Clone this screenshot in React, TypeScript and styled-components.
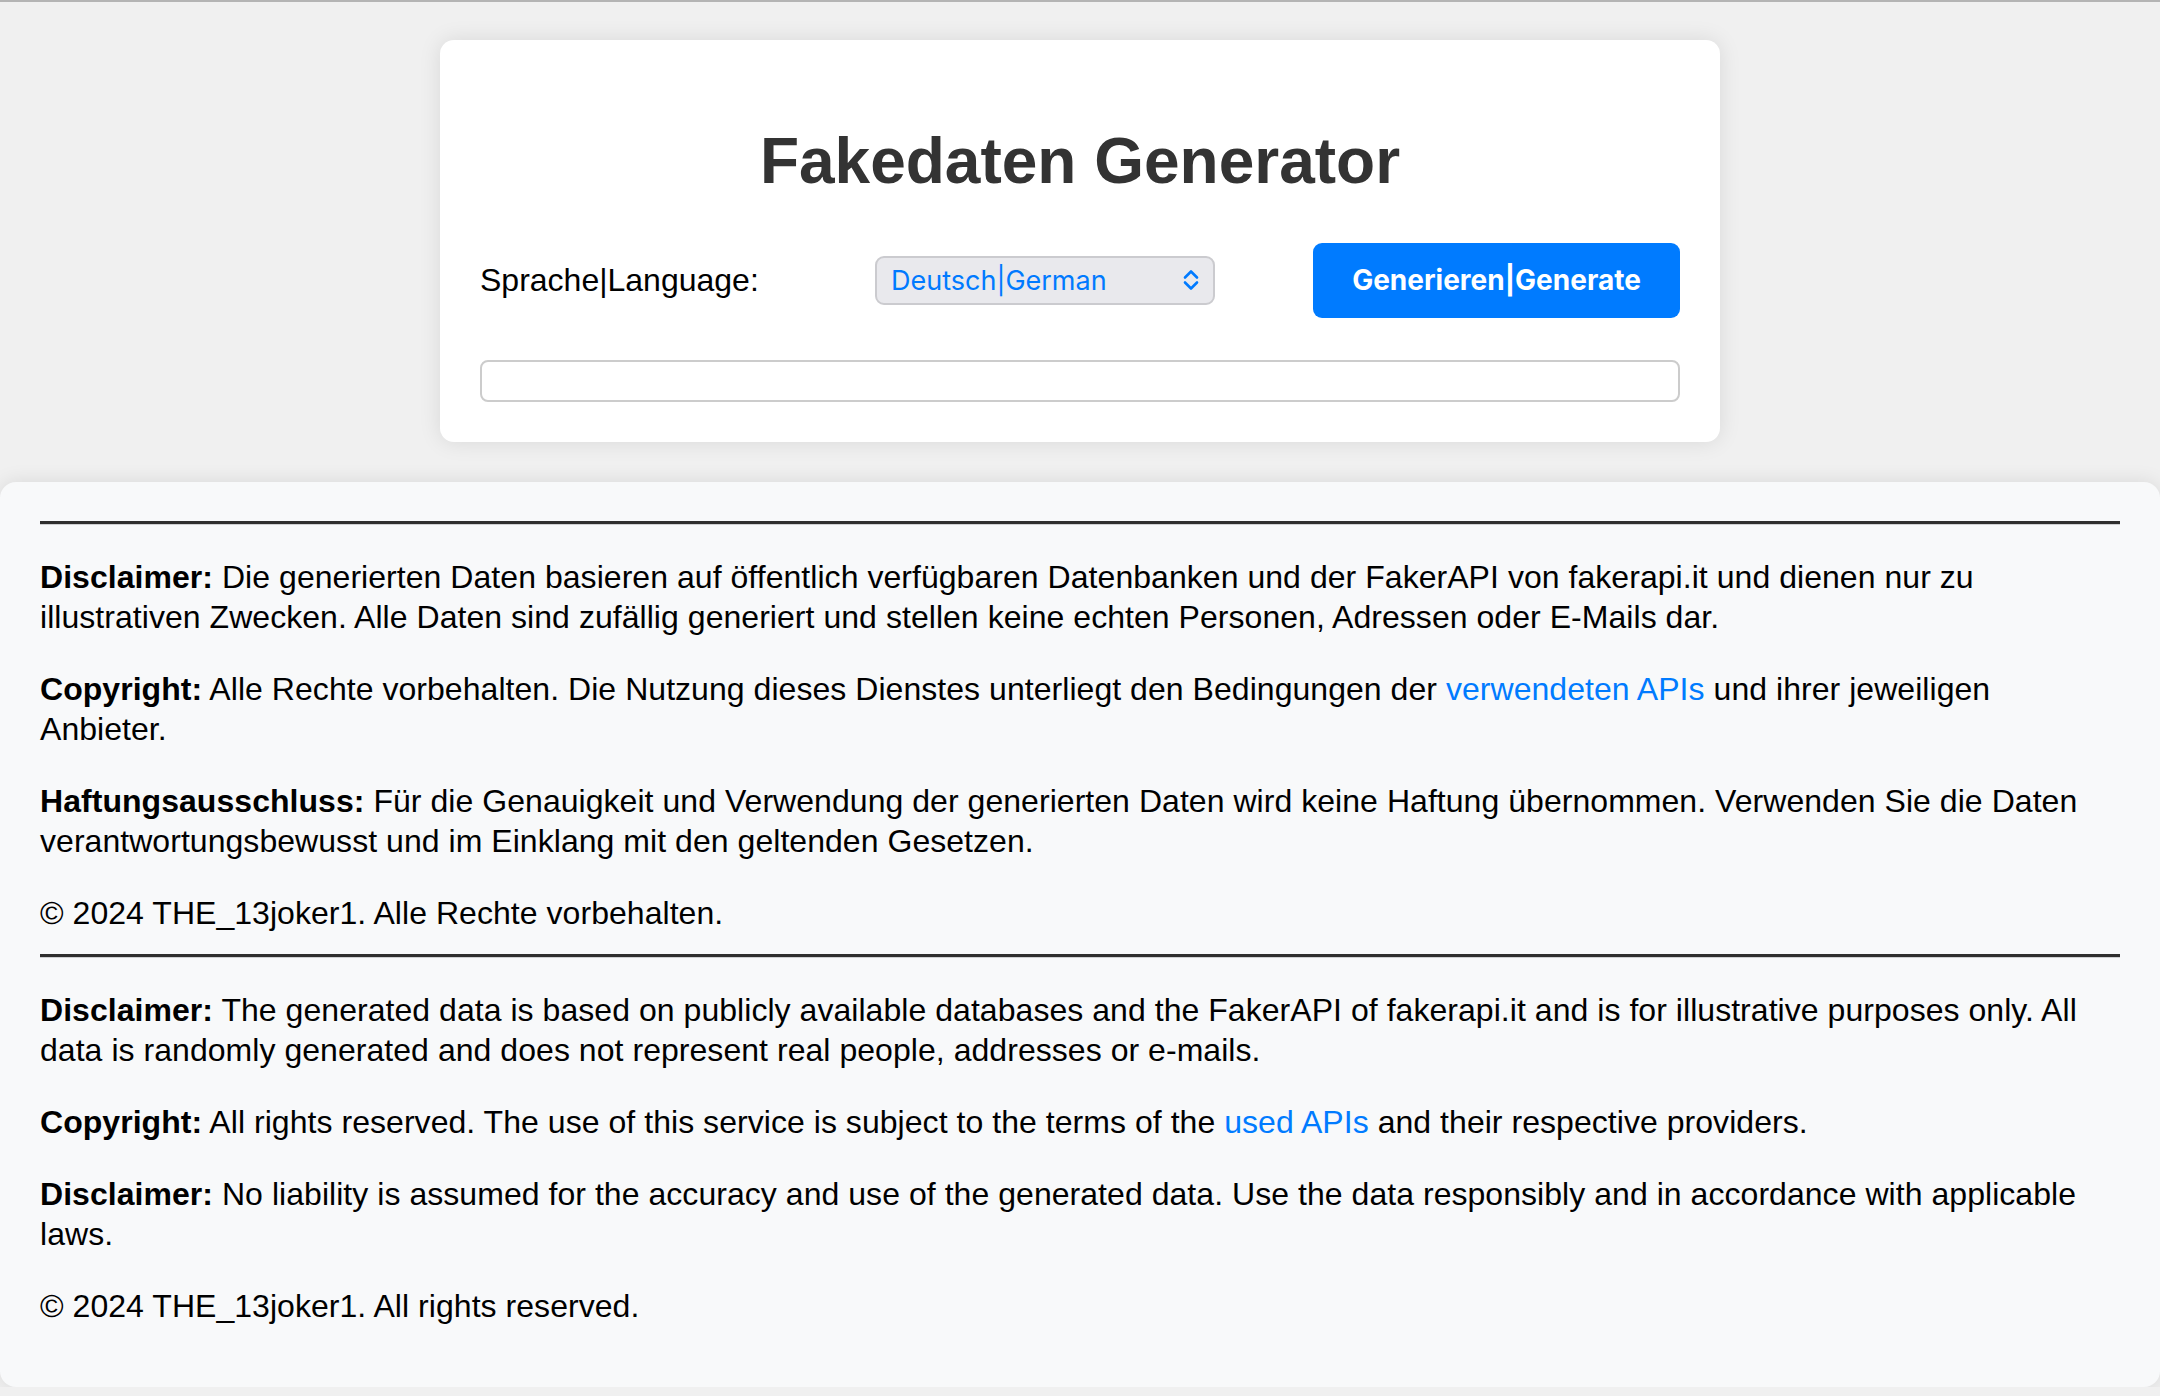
import React from "react";
import styled, { createGlobalStyle } from "styled-components";

const GlobalStyle = createGlobalStyle`
  html, body {
    margin: 0;
    padding: 0;
  }
  body {
    background: #f0f0f0;
    font-family: "Liberation Sans", Arial, Helvetica, sans-serif;
    color: #000;
    border-top: 2px solid #b4b4b4;
  }
  * { box-sizing: border-box; }
`;

const Page = styled.div`
  display: flex;
  flex-direction: column;
  align-items: center;
  padding-top: 38px;
`;

const Card = styled.main`
  width: 1280px;
  background: #ffffff;
  border-radius: 14px;
  box-shadow: 0 0 22px rgba(0, 0, 0, 0.1);
  padding: 40px;
  margin-bottom: 40px;
`;

const Title = styled.h1`
  margin: 45px 0 44px;
  font-size: 64px;
  line-height: 1.15;
  font-weight: 700;
  color: #333333;
  text-align: center;
`;

const ControlRow = styled.div`
  display: flex;
  align-items: center;
  margin-bottom: 42px;
`;

const Label = styled.label`
  width: 395px;
  font-size: 32px;
  line-height: 1.15;
  color: #000;
`;

const SelectWrap = styled.div`
  position: relative;
  width: 340px;
`;

const Select = styled.select`
  appearance: none;
  -webkit-appearance: none;
  width: 100%;
  height: 49px;
  padding: 0 40px 0 14px;
  background: #e9e9ed;
  border: 2px solid #cbcbcf;
  border-radius: 9px;
  color: #007aff;
  font-family: Inter, "Liberation Sans", sans-serif;
  font-size: 27px;
  outline: none;
`;

const Chevron = styled.svg`
  position: absolute;
  right: 15px;
  top: 13px;
  width: 18px;
  height: 22px;
  pointer-events: none;
`;

const GenerateButton = styled.button`
  margin-left: auto;
  width: 367px;
  height: 75px;
  border: none;
  border-radius: 9px;
  background: #007bff;
  color: #ffffff;
  font-family: Inter, "Liberation Sans", sans-serif;
  font-weight: 700;
  font-size: 28px;
  cursor: pointer;
`;

const OutputBox = styled.div`
  height: 42px;
  border: 2px solid #cccccc;
  border-radius: 8px;
  background: #fff;
`;

const Footer = styled.footer`
  align-self: stretch;
  background: #f8f9fa;
  border-radius: 16px;
  box-shadow: 0 0 20px rgba(0, 0, 0, 0.1);
  padding: 39px 40px 40px;
`;

const Divider = styled.hr`
  margin: 0;
  height: 0;
  border: none;
  border-top: 3px solid #2f2f2f;
  border-bottom: 1px solid #cfd0d2;
`;

const Para = styled.p<{ $closing?: boolean }>`
  margin: 32px 0 ${(p) => (p.$closing ? "21px" : "32px")};
  font-size: 32px;
  line-height: 40px;
  letter-spacing: 0.045px;
  color: #000;
`;

const Link = styled.a`
  color: #007bff;
  text-decoration: none;
`;

export default function App() {
  return (
    <>
      <GlobalStyle />
      <Page>
        <Card>
          <Title>Fakedaten Generator</Title>
          <ControlRow>
            <Label htmlFor="lang">Sprache|Language:</Label>
            <SelectWrap>
              <Select id="lang" defaultValue="de">
                <option value="de">Deutsch|German</option>
                <option value="en">English|Englisch</option>
              </Select>
              <Chevron viewBox="0 0 18 22" fill="none">
                <path
                  d="M3 8.5 L9 2.5 L15 8.5 M3 13.5 L9 19.5 L15 13.5"
                  stroke="#007aff"
                  strokeWidth="2.6"
                  strokeLinecap="round"
                  strokeLinejoin="round"
                />
              </Chevron>
            </SelectWrap>
            <GenerateButton>Generieren|Generate</GenerateButton>
          </ControlRow>
          <OutputBox />
        </Card>
        <Footer>
          <Divider />
          <Para>
            <strong>Disclaimer:</strong> Die generierten Daten basieren auf öffentlich verfügbaren
            Datenbanken und der FakerAPI von fakerapi.it und dienen nur zu illustrativen Zwecken.
            Alle Daten sind zufällig generiert und stellen keine echten Personen, Adressen oder
            E-Mails dar.
          </Para>
          <Para>
            <strong>Copyright:</strong> Alle Rechte vorbehalten. Die Nutzung dieses Dienstes
            unterliegt den Bedingungen der <Link href="#">verwendeten APIs</Link> und ihrer
            jeweiligen Anbieter.
          </Para>
          <Para>
            <strong>Haftungsausschluss:</strong> Für die Genauigkeit und Verwendung der generierten
            Daten wird keine Haftung übernommen. Verwenden Sie die Daten verantwortungsbewusst und im
            Einklang mit den geltenden Gesetzen.
          </Para>
          <Para $closing>© 2024 THE_13joker1. Alle Rechte vorbehalten.</Para>
          <Divider />
          <Para>
            <strong>Disclaimer:</strong> The generated data is based on publicly available databases
            and the FakerAPI of fakerapi.it and is for illustrative purposes only. All data is
            randomly generated and does not represent real people, addresses or e-mails.
          </Para>
          <Para>
            <strong>Copyright:</strong> All rights reserved. The use of this service is subject to
            the terms of the <Link href="#">used APIs</Link> and their respective providers.
          </Para>
          <Para>
            <strong>Disclaimer:</strong> No liability is assumed for the accuracy and use of the
            generated data. Use the data responsibly and in accordance with applicable laws.
          </Para>
          <Para $closing>© 2024 THE_13joker1. All rights reserved.</Para>
        </Footer>
      </Page>
    </>
  );
}
